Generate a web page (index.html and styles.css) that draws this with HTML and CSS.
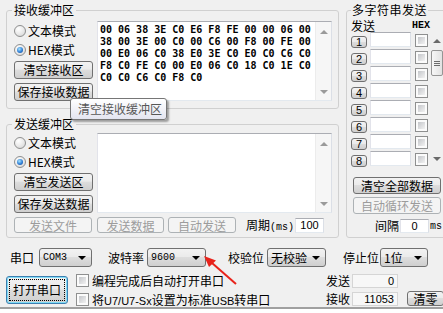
FILE: index.html
```html
<!DOCTYPE html>
<html lang="zh-CN">
<head>
    <meta charset="UTF-8">
    <meta name="viewport" content="width=device-width, initial-scale=1.0">
    <title>串口助手</title>
    <link rel="stylesheet" href="styles.css">
</head>
<body>
    <div class="window">
        <div class="top">
            <div class="left-col">
                <!-- 接收缓冲区 -->
                <fieldset class="group recv">
                    <legend>接收缓冲区</legend>
                    <div class="group-body">
                        <div class="ctrl">
                            <label class="radio"><span class="dot"></span>文本模式</label>
                            <label class="radio on"><span class="dot"></span>HEX模式</label>
                            <button class="btn first">清空接收区</button>
                            <button class="btn">保存接收数据</button>
                        </div>
                        <div class="textbox">
<pre class="hex">00 06 38 3E C0 E6 F8 FE 00 00 06 00
38 00 3E 00 C0 00 C6 00 F8 00 FE 00
00 E0 06 C0 38 E0 3E C0 E0 C0 C6 C0
F8 C0 FE C0 00 E0 06 C0 18 C0 1E C0
C0 C0 C6 C0 F8 C0</pre>
                            <div class="vscroll"><span class="up"></span><span class="down"></span></div>
                        </div>
                    </div>
                </fieldset>

                <!-- 发送缓冲区 -->
                <fieldset class="group send">
                    <legend>发送缓冲区</legend>
                    <div class="group-body">
                        <div class="ctrl">
                            <label class="radio"><span class="dot"></span>文本模式</label>
                            <label class="radio on"><span class="dot"></span>HEX模式</label>
                            <button class="btn first">清空发送区</button>
                            <button class="btn">保存发送数据</button>
                        </div>
                        <div class="textbox">
                            <div class="hex"></div>
                            <div class="vscroll"><span class="up"></span><span class="down"></span></div>
                        </div>
                    </div>
                    <div class="send-row">
                        <button class="btn off b-file">发送文件</button>
                        <button class="btn off b-data">发送数据</button>
                        <button class="btn off b-auto">自动发送</button>
                        <span class="period">周期<small>(ms)</small></span>
                        <span class="edit period-val">100</span>
                    </div>
                </fieldset>
            </div>

            <!-- 多字符串发送 -->
            <fieldset class="group multi">
                <legend>多字符串发送</legend>
                <div class="multi-head"><span>发送</span><span class="hex-h">HEX</span></div>
                <div class="multi-list">
                    <div class="rows">
                        <div class="mrow"><button class="btn num">1</button><span class="edit"></span><span class="chk"></span></div>
                        <div class="mrow"><button class="btn num">2</button><span class="edit"></span><span class="chk"></span></div>
                        <div class="mrow"><button class="btn num">3</button><span class="edit"></span><span class="chk"></span></div>
                        <div class="mrow"><button class="btn num">4</button><span class="edit"></span><span class="chk"></span></div>
                        <div class="mrow"><button class="btn num">5</button><span class="edit"></span><span class="chk"></span></div>
                        <div class="mrow"><button class="btn num">6</button><span class="edit"></span><span class="chk"></span></div>
                        <div class="mrow"><button class="btn num">7</button><span class="edit"></span><span class="chk"></span></div>
                        <div class="mrow"><button class="btn num">8</button><span class="edit"></span><span class="chk"></span></div>
                    </div>
                    <div class="mscroll">
                        <span class="up"></span>
                        <span class="thumb"><span class="grip"></span></span>
                        <span class="down"></span>
                    </div>
                </div>
                <button class="btn wide first">清空全部数据</button>
                <button class="btn wide off">自动循环发送</button>
                <div class="interval"><span class="lbl">间隔</span><span class="edit">0</span><span class="ms">ms</span></div>
            </fieldset>
        </div>

        <!-- 串口设置 -->
        <div class="port-row">
            <span class="lbl l-port">串口</span><div class="combo c-port mono">COM3<i class="caret"></i></div>
            <span class="lbl l-baud">波特率</span><div class="combo c-baud mono">9600<i class="caret"></i></div>
            <span class="lbl l-parity">校验位</span><div class="combo c-parity">无校验<i class="caret"></i></div>
            <span class="lbl l-stop">停止位</span><div class="combo c-stop">1位<i class="caret"></i></div>
        </div>

        <div class="open-row">
            <button class="btn open"><span>打开串口</span></button>
            <div class="opts">
                <label class="check"><span class="chk"></span><span>编程完成后自动打开串口</span></label>
                <label class="check"><span class="chk"></span><span>将<span class="latin">U7/U7-Sx</span>设置为标准<span class="latin">USB</span>转串口</span></label>
            </div>
            <div class="counters">
                <span>发送</span><span class="count">0</span><span></span>
                <span>接收</span><span class="count">11053</span><button class="btn clr">清零</button>
            </div>
        </div>
    </div>
    <div class="status"></div>

    <!-- tooltip -->
    <div class="tooltip">清空接收缓冲区</div>

    <!-- red pointer arrow -->
    <svg class="arrow" width="40" height="36" viewBox="0 0 40 36">
        <line x1="36" y1="32" x2="12" y2="11" stroke="#e8231b" stroke-width="2"/>
        <polygon points="4,4 16,8.5 9,15" fill="#e8231b"/>
    </svg>
</body>
</html>
```

FILE: styles.css
```css
* {
    box-sizing: border-box;
}
body {
    margin: 0;
    width: 443px;
    height: 313px;
    overflow: hidden;
    position: relative;
    display: flex;
    flex-direction: column;
    background: #f0f0f0;
    font-family: "Noto Sans CJK SC", sans-serif;
    font-size: 12px;
    color: #000;
}
.window {
    flex: none;
    width: 460px;
    height: 307px;
    padding: 3px 0 0 6px;
}
.top {
    display: flex;
    gap: 7px;
}
.left-col {
    flex: none;
    width: 333px;
    display: flex;
    flex-direction: column;
    gap: 8px;
}
/* group box */
.group {
    margin: 0;
    min-width: 0;
    border: 1px solid #d0d0d0;
    border-radius: 3px;
    padding: 0 6px 7px 7px;
}
.group legend {
    height: 14px;
    line-height: 14px;
    padding: 0 2px;
    margin-left: -2px;
}
.group-body {
    display: flex;
    gap: 4px;
    padding-top: 4px;
}
.send {
    padding-bottom: 4px;
}
.send .group-body {
    padding-top: 2px;
}
.ctrl {
    flex: none;
    width: 79px;
    display: flex;
    flex-direction: column;
}
.radio {
    height: 19px;
    display: flex;
    align-items: center;
    gap: 2px;
    line-height: 14px;
}
.dot {
    flex: none;
    width: 12px;
    height: 12px;
    border-radius: 50%;
    border: 1px solid #8e8f8f;
    background: radial-gradient(circle at 35% 30%, #ffffff 0%, #e8e8e8 55%, #cfcfcf 100%);
    display: flex;
    align-items: center;
    justify-content: center;
}
.radio.on .dot::after {
    content: "";
    width: 6px;
    height: 6px;
    border-radius: 50%;
    background: radial-gradient(circle at 40% 35%, #a6e4ff 0%, #2f7fd6 55%, #0f3f8c 100%);
}
/* buttons */
.btn {
    font: inherit;
    color: #000;
    padding: 0;
    border: 1px solid #707070;
    border-radius: 3px;
    background: linear-gradient(#f2f2f2 0%, #ebebeb 45%, #dddddd 50%, #cfcfcf 100%);
    line-height: 14px;
    white-space: nowrap;
}
.btn.off {
    border-color: #adb2b5;
    background: #f4f4f4;
    color: #9c9c9c;
}
.ctrl .btn {
    height: 18px;
    margin-top: 4px;
}
.ctrl .btn.first {
    margin-top: 2px;
}
/* text areas */
.textbox {
    flex: 1;
    height: 80px;
    display: flex;
    background: #fff;
    border: 1px solid;
    border-color: #abadb3 #dbdfe6 #e3e9ef #e2e3ea;
}
.hex {
    flex: 1;
    margin: 0;
    padding: 2px 0 0 2px;
    font: bold 10px/12px "DejaVu Sans Mono", monospace;
    white-space: pre;
}
.vscroll {
    width: 16px;
    background: #f6f6f6;
    border-left: 1px solid #ececec;
    display: flex;
    flex-direction: column;
    align-items: center;
    justify-content: space-between;
    padding: 8px 0 6px;
}
.up {
    width: 0;
    height: 0;
    border: 4px solid transparent;
    border-top: 0;
    border-bottom: 4px solid #9a9a9a;
}
.down {
    width: 0;
    height: 0;
    border: 4px solid transparent;
    border-bottom: 0;
    border-top: 4px solid #9a9a9a;
}
.send-row {
    display: flex;
    align-items: center;
    height: 16px;
    margin-top: 4px;
}
.send-row .btn {
    height: 16px;
    line-height: 13px;
}
.b-file {
    width: 78px;
}
.b-data {
    width: 67px;
    margin-left: 5px;
}
.b-auto {
    width: 68px;
    margin-left: 4px;
}
.period {
    margin-left: 10px;
    line-height: 14px;
}
.period small {
    font: 10px "Liberation Mono", monospace;
}
.edit {
    display: block;
    background: #fff;
    border: 1px solid;
    border-color: #abadb3 #dbdfe6 #e3e9ef #e2e3ea;
}
.period-val {
    width: 29px;
    height: 15px;
    margin-left: 1px;
    font: 11px/13px "Liberation Sans", sans-serif;
    text-align: center;
}
/* 多字符串发送 */
.multi {
    flex: none;
    width: 100px;
    padding: 0 0 0 4px;
}
.multi legend {
    margin-left: 0;
    padding: 0 1px;
    letter-spacing: 0.5px;
}
.multi-head {
    display: flex;
    justify-content: space-between;
    align-items: center;
    width: 79px;
    height: 11px;
    margin-top: 3px;
    line-height: 11px;
}
.hex-h {
    font: bold 10px "Liberation Mono", monospace;
}
.multi-list {
    display: flex;
    margin-top: 1px;
}
.mrow {
    display: flex;
    align-items: flex-start;
    height: 17px;
}
.num {
    width: 16px;
    height: 12px;
    margin-top: 4px;
    font: 11px/10px "Liberation Sans", sans-serif;
}
.mrow .edit {
    width: 41px;
    height: 15px;
    margin-left: 3px;
}
.mrow .chk {
    margin: 2px 0 0 4px;
}
.chk {
    display: block;
    flex: none;
    width: 13px;
    height: 13px;
    padding: 2px;
    border: 1px solid #8e8f8f;
    background: linear-gradient(135deg, #c4c6ca, #f2f2f2) content-box, #fbfbfb;
}
.mscroll {
    width: 13px;
    height: 134px;
    margin: 1px 0 0 2px;
    background: #f0f0f0;
    display: flex;
    flex-direction: column;
    align-items: center;
}
.mscroll .up {
    margin-top: 6px;
    border-bottom-color: #6a6a6a;
}
.mscroll .down {
    margin-top: auto;
    margin-bottom: 6px;
    border-top-color: #6a6a6a;
}
.thumb {
    width: 12px;
    height: 26px;
    margin-top: 7px;
    border: 1px solid #959595;
    border-radius: 2px;
    background: linear-gradient(to right, #f7f7f7, #e2e2e2);
    display: flex;
    align-items: center;
    justify-content: center;
}
.grip {
    width: 6px;
    height: 5px;
    border-top: 1px solid #6c6c6c;
    border-bottom: 1px solid #6c6c6c;
    background: linear-gradient(#6c6c6c, #6c6c6c) center / 100% 1px no-repeat;
}
.wide {
    display: block;
    width: 88px;
    height: 17px;
    margin: 3px 0 0 2px;
}
.wide.first {
    margin-top: 9px;
}
.interval {
    display: flex;
    align-items: center;
    height: 14px;
    margin-top: 5px;
    padding-left: 24px;
}
.interval .lbl {
    width: 24px;
    line-height: 14px;
}
.interval .edit {
    width: 29px;
    height: 14px;
    margin-left: 1px;
    font: 11px/12px "Liberation Sans", sans-serif;
    text-align: center;
}
.ms {
    margin-left: 1px;
    font: 10px "Liberation Mono", monospace;
}
/* 串口设置 */
.port-row {
    display: flex;
    align-items: center;
    height: 19px;
    margin-top: 10px;
}
.lbl {
    line-height: 14px;
}
.l-port {
    margin-left: 4px;
}
.l-baud {
    margin-left: 16px;
}
.l-parity {
    margin-left: 22px;
}
.l-stop {
    margin-left: 17px;
}
.combo {
    height: 19px;
    display: flex;
    align-items: center;
    justify-content: space-between;
    padding: 0 5px 0 3px;
    border: 1px solid #707070;
    border-radius: 3px;
    background: linear-gradient(#f2f2f2 0%, #ebebeb 45%, #dddddd 50%, #cfcfcf 100%);
    line-height: 14px;
}
.combo.mono {
    font: 10px "Liberation Mono", monospace;
}
.caret {
    width: 0;
    height: 0;
    border: 4px solid transparent;
    border-bottom: 0;
    border-top: 4px solid #000;
}
.c-port {
    width: 53px;
    margin-left: 5px;
}
.c-baud {
    width: 59px;
    margin-left: 3px;
}
.c-parity {
    width: 59px;
    margin-left: 3px;
}
.c-stop {
    width: 48px;
    margin-left: 1px;
}
.open-row {
    display: flex;
    margin-top: 6px;
}
.open {
    width: 62px;
    height: 28px;
    margin-top: 3px;
    padding: 2px;
    border-color: #3c7fb1;
    box-shadow: inset 0 0 0 1px #7fdcf7;
}
.open span {
    display: block;
    height: 100%;
    border: 1px dotted #000;
    line-height: 20px;
}
.opts {
    flex: none;
    width: 250px;
    margin-left: 8px;
    display: flex;
    flex-direction: column;
    gap: 4px;
}
.check {
    display: flex;
    align-items: center;
    gap: 3px;
    height: 15px;
    line-height: 14px;
    white-space: nowrap;
}
.latin {
    font: 11px "Liberation Sans", sans-serif;
}
.counters {
    display: grid;
    grid-template-columns: 24px 46px auto;
    column-gap: 2px;
    row-gap: 2px;
    align-items: center;
    line-height: 14px;
}
.count {
    height: 14px;
    padding-right: 3px;
    text-align: right;
    background: #f7f7f7;
    border: 1px solid #d5d5d5;
    font: 11px/12px "Liberation Sans", sans-serif;
}
.clr {
    width: 37px;
    height: 15px;
    margin-left: 7px;
    line-height: 12px;
}
.status {
    flex: 1;
    border-top: 2px solid #a0a0a0;
    background: #fff;
}
/* overlays */
.tooltip {
    position: absolute;
    left: 70px;
    top: 98px;
    width: 97px;
    height: 22px;
    padding-left: 7px;
    border: 1px solid #767676;
    border-radius: 3px;
    background: linear-gradient(#ffffff, #e4e5f0);
    box-shadow: 2px 2px 2px rgba(0, 0, 0, 0.35);
    color: #575757;
    line-height: 20px;
    white-space: nowrap;
}
.arrow {
    position: absolute;
    left: 200px;
    top: 252px;
}
```
